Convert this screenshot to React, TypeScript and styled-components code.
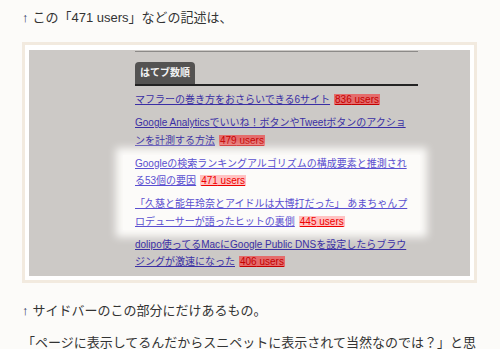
import React from "react";
import styled, { createGlobalStyle } from "styled-components";

const Global = createGlobalStyle`
  html, body {
    margin: 0;
    padding: 0;
    background: #fcfbf9;
  }
  body {
    font-family: "Liberation Sans", "Noto Sans CJK JP", sans-serif;
    color: #333;
  }
`;

const Page = styled.div`
  width: 500px;
  height: 349px;
  overflow: hidden;
  box-sizing: border-box;
  padding: 2px 23px 0 22px;
`;

const Para = styled.p<{ $top?: number }>`
  margin: ${(p) => p.$top ?? 0}px 0 0 0;
  font-size: 13px;
  line-height: 32px;
  white-space: nowrap;
  color: #333;
`;

const Arrow = styled.span`
  color: #25305a;
  margin-right: 4px;
`;

const Frame = styled.div`
  margin-top: 8px;
  border: 3px solid #f2eadf;
  background: #ffffff;
  padding: 5px 4px 4px 4px;
`;

const Shot = styled.div`
  height: 226px;
  background: #ccc9c6;
  display: flex;
  padding-left: 106px;
  overflow: hidden;
`;

const Column = styled.div`
  width: 283px;
  display: flex;
  flex-direction: column;
`;

const TopRule = styled.div`
  margin-top: 1px;
  height: 1px;
  background: #8c8a88;
`;

const TabBar = styled.div`
  margin-top: 10px;
  display: flex;
  border-bottom: 2px solid #232323;
`;

const Tab = styled.div`
  width: 60px;
  height: 22px;
  box-sizing: border-box;
  background: #545352;
  border-radius: 4px 4px 0 0;
  color: #f2f2f2;
  font-weight: bold;
  font-size: 10px;
  line-height: 22px;
  text-align: center;
`;

const List = styled.div`
  margin-top: 5px;
  display: flex;
  flex-direction: column;
  gap: 5.5px;
`;

const Highlight = styled.div`
  margin: 0 -2px 0 -12px;
  padding: 0 2px 0 12px;
  background: #fcfbf9;
  box-shadow: 0 0 8px 7px #fcfbf9;
  display: flex;
  flex-direction: column;
  gap: 5.5px;
`;

const Item = styled.div`
  font-size: 10px;
  line-height: 17.5px;
  white-space: nowrap;
`;

const Link = styled.a<{ $lit?: boolean }>`
  color: ${(p) => (p.$lit ? "#5a4fd0" : "#3a2fa4")};
  text-decoration: underline;
`;

const Users = styled.span<{ $lit?: boolean }>`
  margin-left: 4px;
  padding: 0 1px;
  background: ${(p) => (p.$lit ? "#ffc2c2" : "#e46c6c")};
  color: ${(p) => (p.$lit ? "#ee0000" : "#c40000")};
  text-decoration: underline;
`;

type Entry = { lines: string[]; users: number };

const Entry: React.FC<{ e: Entry; lit?: boolean }> = ({ e, lit }) => (
  <Item>
    <Link $lit={lit}>
      {e.lines.map((l, i) => (
        <React.Fragment key={i}>
          {i > 0 && <br />}
          {l}
        </React.Fragment>
      ))}
    </Link>
    <Users $lit={lit}>{e.users} users</Users>
  </Item>
);

const entries: Entry[] = [
  { lines: ["マフラーの巻き方をおさらいできる6サイト"], users: 836 },
  {
    lines: ["Google Analyticsでいいね！ボタンやTweetボタンのアクショ", "ンを計測する方法"],
    users: 479,
  },
  {
    lines: ["Googleの検索ランキングアルゴリズムの構成要素と推測され", "る53個の要因"],
    users: 471,
  },
  {
    lines: ["「久慈と能年玲奈とアイドルは大博打だった」 あまちゃんプ", "ロデューサーが語ったヒットの裏側"],
    users: 445,
  },
  {
    lines: ["dolipo使ってるMacにGoogle Public DNSを設定したらブラウ", "ジングが激速になった"],
    users: 406,
  },
];

export default function App() {
  return (
    <Page>
      <Global />
      <Para>
        <Arrow>↑</Arrow>この「471 users」などの記述は、
      </Para>
      <Frame>
        <Shot>
          <Column>
            <TopRule />
            <TabBar>
              <Tab>はてブ数順</Tab>
            </TabBar>
            <List>
              <Entry e={entries[0]} />
              <Entry e={entries[1]} />
              <Highlight>
                <Entry e={entries[2]} lit />
                <Entry e={entries[3]} lit />
              </Highlight>
              <Entry e={entries[4]} />
            </List>
          </Column>
        </Shot>
      </Frame>
      <Para $top={12}>
        <Arrow>↑</Arrow>サイドバーのこの部分にだけあるもの。
      </Para>
      <Para>「ページに表示してるんだからスニペットに表示されて当然なのでは？」と思</Para>
    </Page>
  );
}
